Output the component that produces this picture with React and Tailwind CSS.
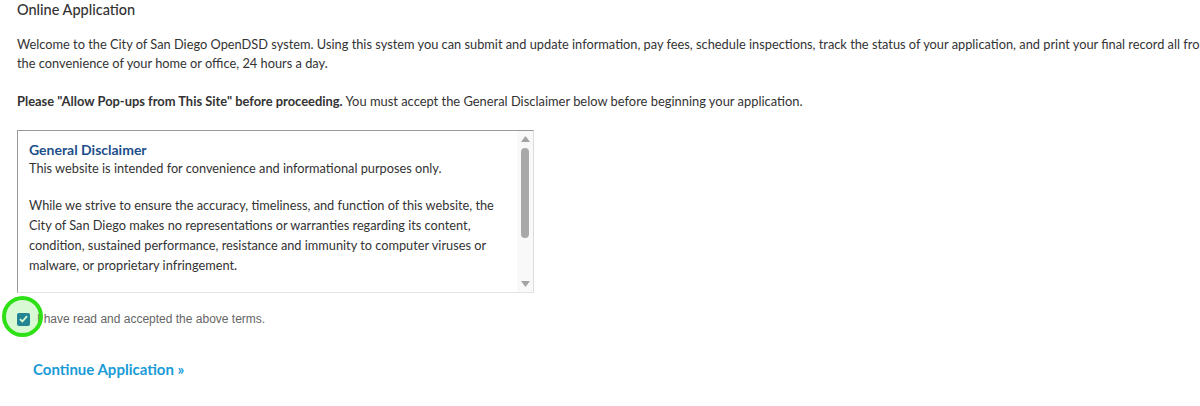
import React from "react";

const Scrollbar = () => (
  <div className="flex w-[16px] shrink-0 flex-col items-center bg-[#f9f9f9] py-[5px]">
    <svg width="9" height="6" viewBox="0 0 9 6">
      <path d="M4.5 0 L9 6 L0 6 Z" fill="#a3a3a3" />
    </svg>
    <div className="mt-[6px] h-[90px] w-[8px] rounded-full bg-[#a8a8a8]" />
    <div className="flex-1" />
    <svg width="9" height="6" viewBox="0 0 9 6">
      <path d="M0 0 L9 0 L4.5 6 Z" fill="#a3a3a3" />
    </svg>
  </div>
);

const App = () => {
  return (
    <div className="h-[406px] w-[1200px] overflow-hidden bg-white font-['Lato','Open_Sans',sans-serif] text-[#333]">
      <div className="w-[1300px] pl-[17px] pt-[1px]">
        {/* Title */}
        <h1 className="text-[14.5px] font-medium leading-[18px] text-[#333]">Online Application</h1>

        {/* Intro */}
        <p className="mt-[16px] w-[1205px] text-[12.8px] leading-[19px]">
          Welcome to the City of San Diego OpenDSD system. Using this system you can submit and update information, pay fees, schedule inspections, track the status of your application, and print your final record all from the convenience of your home or office, 24 hours a day.
        </p>
        <p className="mt-[19px] text-[12.9px] leading-[19px]">
          <span className="font-bold">Please "Allow Pop-ups from This Site" before proceeding.</span> You must accept the General Disclaimer below before beginning your application.
        </p>

        {/* Disclaimer box */}
        <div className="mt-[19px] flex h-[163px] w-[517px] border-t border-l border-r border-b border-t-[#999] border-l-[#999] border-r-[#ddd] border-b-[#e3e3e3]">
          <div className="flex-1 overflow-hidden pl-[11px] pr-[16px] pt-[10px] text-[12.75px] leading-[20px]">
            <div className="text-[14px] font-bold leading-[18px] text-[#1d4f8b]">General Disclaimer</div>
            <p className="leading-[19px]">This website is intended for convenience and informational purposes only.</p>
            <p className="mt-[17px]">
              While we strive to ensure the accuracy, timeliness, and function of this website, the City of San Diego makes no representations or warranties regarding its content, condition, sustained performance, resistance and immunity to computer viruses or malware, or proprietary infringement.
            </p>
          </div>
          <Scrollbar />
        </div>

        {/* Accept terms */}
        <div className="relative mt-[17px] flex items-center">
          <span className="flex h-[13px] w-[13px] items-center justify-center rounded-[2px] bg-[#1d6fb0]">
            <svg width="9" height="8" viewBox="0 0 9 8">
              <path d="M1 4.2 L3.4 6.5 L8 1.2" stroke="#fff" strokeWidth="1.8" fill="none" />
            </svg>
          </span>
          <span className="ml-[7px] font-['Liberation_Sans',Arial,sans-serif] text-[12px] text-[#666]">I have read and accepted the above terms.</span>
          {/* highlight ring */}
          <span className="absolute left-[-15px] top-[-14px] h-[41px] w-[41px] rounded-full border-[4px] border-[#2ee016] bg-[#3ee02a]/20" />
        </div>

        {/* Continue */}
        <div className="mt-[29px] pl-[16px]">
          <a className="text-[15px] font-bold text-[#1a9bd7]" href="#">Continue Application »</a>
        </div>
      </div>
    </div>
  );
};

export default App;
